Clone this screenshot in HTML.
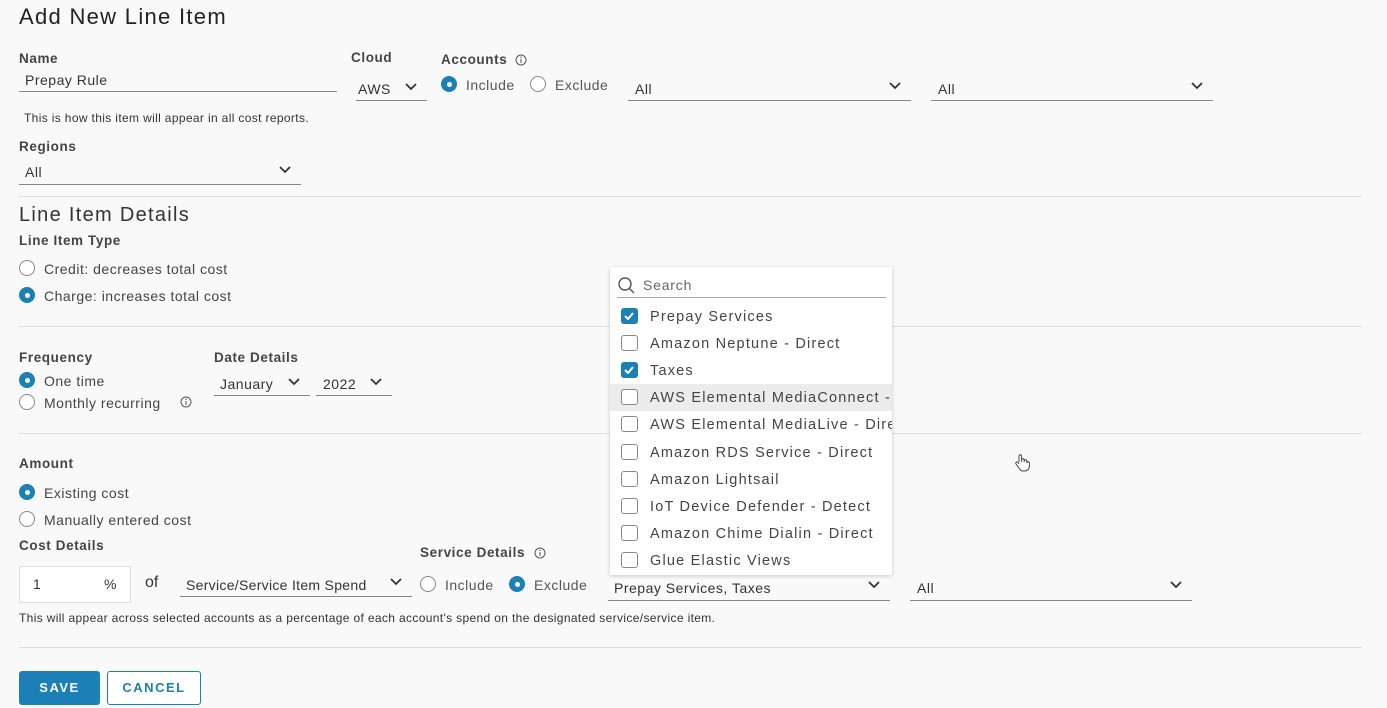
<!DOCTYPE html>
<html><head><style>
body{margin:0;width:1387px;height:708px;background:#f9f9f9;font-family:"Liberation Sans",sans-serif;color:#333;position:relative;overflow:hidden}
.a{position:absolute;white-space:nowrap}
.lbl{font-size:13.5px;font-weight:bold;color:#444;letter-spacing:.6px}
.t{font-size:14px;color:#333;letter-spacing:.5px}
.ul{position:absolute;height:1px;background:#888}
.hr{position:absolute;left:19px;width:1343px;height:1px;background:#ddd}
.r{position:absolute;width:16px;height:16px;border:1.5px solid #888;border-radius:50%;box-sizing:border-box;background:#fff}
.r.on{border:none;background:#1a80b6}
.r.on:after{content:"";position:absolute;left:5.5px;top:5.5px;width:5px;height:5px;border-radius:50%;background:#fff}
.cb{position:absolute;left:621px;width:17px;height:16px;border:1.5px solid #888;border-radius:3px;box-sizing:border-box;background:#fff}
.cb.on{border:none;background:#1a80b6}
.it{position:absolute;left:650px;font-size:14.5px;color:#444;letter-spacing:1.2px;white-space:nowrap}
.help{font-size:12px;color:#333;letter-spacing:.35px}
</style></head><body>
<svg width="0" height="0" style="position:absolute"><defs><symbol id="ch" viewBox="0 0 12 8"><polyline points="1,1 6,6 11,1" fill="none" stroke="#333" stroke-width="1.8"/></symbol><symbol id="inf" viewBox="0 0 12 12"><circle cx="6" cy="6" r="5" fill="none" stroke="#555" stroke-width="1"/><line x1="6" y1="5" x2="6" y2="9" stroke="#555"/><circle cx="6" cy="3.3" r=".7" fill="#555"/></symbol></defs></svg>

<div class="a" style="left:19px;top:4px;font-size:22px;color:#222;letter-spacing:1.3px">Add New Line Item</div>

<div class="a lbl" style="left:19px;top:51px">Name</div>
<div class="a t" style="left:25px;top:72px">Prepay Rule</div>
<div class="ul" style="left:19px;top:91px;width:318px"></div>
<div class="a help" style="left:24px;top:111px">This is how this item will appear in all cost reports.</div>

<div class="a lbl" style="left:351px;top:50px">Cloud</div>
<div class="a t" style="left:358px;top:81px">AWS</div>
<svg class="a" style="left:405px;top:83px" width="12" height="8"><use href="#ch"/></svg>
<div class="ul" style="left:356px;top:100px;width:71px"></div>

<div class="a lbl" style="left:441px;top:52px">Accounts</div>
<svg class="a" style="left:515px;top:54px" width="12" height="12"><use href="#inf"/></svg>
<div class="r on" style="left:441px;top:76px"></div><div class="a t" style="left:466px;top:77px;color:#555">Include</div>
<div class="r" style="left:530px;top:76px"></div><div class="a t" style="left:555px;top:77px;color:#555">Exclude</div>

<div class="a t" style="left:635px;top:81px">All</div>
<svg class="a" style="left:889px;top:82px" width="12" height="8"><use href="#ch"/></svg>
<div class="ul" style="left:628px;top:100px;width:283px"></div>
<div class="a t" style="left:938px;top:81px">All</div>
<svg class="a" style="left:1191px;top:82px" width="12" height="8"><use href="#ch"/></svg>
<div class="ul" style="left:931px;top:100px;width:282px"></div>

<div class="a lbl" style="left:19px;top:139px">Regions</div>
<div class="a t" style="left:25px;top:164px">All</div>
<svg class="a" style="left:279px;top:166px" width="12" height="8"><use href="#ch"/></svg>
<div class="ul" style="left:19px;top:184px;width:282px"></div>

<div class="hr" style="top:196px"></div>
<div class="a" style="left:19px;top:204px;font-size:20px;color:#333;letter-spacing:1.3px">Line Item Details</div>
<div class="a lbl" style="left:19px;top:233px">Line Item Type</div>
<div class="r" style="left:19px;top:260px"></div><div class="a t" style="left:44px;top:261px;color:#444">Credit: decreases total cost</div>
<div class="r on" style="left:19px;top:287px"></div><div class="a t" style="left:44px;top:288px;color:#444">Charge: increases total cost</div>

<div class="hr" style="top:326px"></div>
<div class="a lbl" style="left:19px;top:350px">Frequency</div>
<div class="r on" style="left:19px;top:372px"></div><div class="a t" style="left:44px;top:373px;color:#444">One time</div>
<div class="r" style="left:19px;top:394px"></div><div class="a t" style="left:44px;top:395px;color:#444">Monthly recurring</div>
<svg class="a" style="left:180px;top:396px" width="12" height="12"><use href="#inf"/></svg>
<div class="a lbl" style="left:214px;top:350px">Date Details</div>
<div class="a t" style="left:220px;top:376px">January</div>
<svg class="a" style="left:288px;top:378px" width="12" height="8"><use href="#ch"/></svg>
<div class="ul" style="left:214px;top:395px;width:96px"></div>
<div class="a t" style="left:323px;top:376px">2022</div>
<svg class="a" style="left:370px;top:378px" width="12" height="8"><use href="#ch"/></svg>
<div class="ul" style="left:316px;top:395px;width:76px"></div>

<div class="hr" style="top:433px"></div>
<div class="a lbl" style="left:19px;top:456px">Amount</div>
<div class="r on" style="left:19px;top:484px"></div><div class="a t" style="left:44px;top:485px;color:#444">Existing cost</div>
<div class="r" style="left:19px;top:511px"></div><div class="a t" style="left:44px;top:512px;color:#444">Manually entered cost</div>
<div class="a lbl" style="left:19px;top:538px">Cost Details</div>
<div class="a" style="left:19px;top:566px;width:112px;height:37px;border:1px solid #ddd;background:#fff;box-sizing:border-box"></div>
<div class="a t" style="left:33px;top:576px">1</div>
<div class="a t" style="left:104px;top:576px">%</div>
<div class="a" style="left:145px;top:574px;font-size:16px">of</div>
<div class="a t" style="left:186px;top:577px;letter-spacing:.3px">Service/Service Item Spend</div>
<svg class="a" style="left:390px;top:578px" width="12" height="8"><use href="#ch"/></svg>
<div class="ul" style="left:180px;top:596px;width:232px"></div>
<div class="a lbl" style="left:420px;top:545px">Service Details</div>
<svg class="a" style="left:534px;top:547px" width="12" height="12"><use href="#inf"/></svg>
<div class="r" style="left:420px;top:576px"></div><div class="a t" style="left:445px;top:577px;color:#555">Include</div>
<div class="r on" style="left:509px;top:576px"></div><div class="a t" style="left:534px;top:577px;color:#555">Exclude</div>
<div class="a t" style="left:614px;top:580px">Prepay Services, Taxes</div>
<svg class="a" style="left:868px;top:581px" width="12" height="8"><use href="#ch"/></svg>
<div class="ul" style="left:608px;top:600px;width:282px"></div>
<div class="a t" style="left:917px;top:580px">All</div>
<svg class="a" style="left:1170px;top:581px" width="12" height="8"><use href="#ch"/></svg>
<div class="ul" style="left:910px;top:600px;width:282px"></div>
<div class="a help" style="left:19px;top:611px">This will appear across selected accounts as a percentage of each account's spend on the designated service/service item.</div>

<div class="hr" style="top:647px"></div>
<div class="a" style="left:19px;top:671px;width:81px;height:34px;background:#1a80b6;border-radius:3px;color:#fff;font-size:13px;font-weight:bold;letter-spacing:1.5px;text-align:center;line-height:34px">SAVE</div>
<div class="a" style="left:107px;top:671px;width:94px;height:34px;border:1px solid #1a80b6;box-sizing:border-box;border-radius:3px;color:#1a80b6;font-size:13px;font-weight:bold;letter-spacing:1.5px;text-align:center;line-height:32px;background:#fff">CANCEL</div>

<div class="a" style="left:610px;top:267px;width:282px;height:308px;background:#fff;box-shadow:0 1px 4px rgba(0,0,0,.2);overflow:hidden">
<div class="a" style="left:0;top:117px;width:282px;height:27px;background:#ececec"></div>
</div>
<svg class="a" style="left:617px;top:276px" width="20" height="18"><circle cx="8" cy="8" r="6" fill="none" stroke="#555" stroke-width="1.4"/><line x1="12.5" y1="12.5" x2="17" y2="17" stroke="#555" stroke-width="1.4"/></svg>
<div class="a" style="left:643px;top:277px;font-size:14px;color:#666;letter-spacing:.8px">Search</div>
<div class="ul" style="left:617px;top:297px;width:269px;background:#aaa"></div>
<div style="position:absolute;left:0;top:0;width:892px;height:708px;overflow:hidden">
<div class="cb on" style="top:308px"></div><div class="it" style="top:309px">Prepay Services</div>
<div class="cb" style="top:335px"></div><div class="it" style="top:336px">Amazon Neptune - Direct</div>
<div class="cb on" style="top:362px"></div><div class="it" style="top:363px">Taxes</div>
<div class="cb" style="top:389px"></div><div class="it" style="top:390px">AWS Elemental MediaConnect - Direct</div>
<div class="cb" style="top:416px"></div><div class="it" style="top:417px">AWS Elemental MediaLive - Direct</div>
<div class="cb" style="top:444px"></div><div class="it" style="top:445px">Amazon RDS Service - Direct</div>
<div class="cb" style="top:471px"></div><div class="it" style="top:472px">Amazon Lightsail</div>
<div class="cb" style="top:498px"></div><div class="it" style="top:499px">IoT Device Defender - Detect</div>
<div class="cb" style="top:525px"></div><div class="it" style="top:526px">Amazon Chime Dialin - Direct</div>
<div class="cb" style="top:552px"></div><div class="it" style="top:553px">Glue Elastic Views</div>
</div>
<svg class="a" style="left:624px;top:312px" width="10" height="8"><polyline points="1,4 4,7 9,1" fill="none" stroke="#fff" stroke-width="2"/></svg>
<svg class="a" style="left:624px;top:366px" width="10" height="8"><polyline points="1,4 4,7 9,1" fill="none" stroke="#fff" stroke-width="2"/></svg>
<svg class="a" style="left:1014px;top:453px" width="18" height="20"><path d="M5 9V3a1.3 1.3 0 0 1 2.6 0v6 M7.6 8V7a1.3 1.3 0 0 1 2.6 0v2 M10.2 9V8a1.3 1.3 0 0 1 2.6 0v2 M12.8 10a1.3 1.3 0 0 1 2.6 0v3c0 3-2 5-5 5H9c-2 0-3-1-4-3l-3-4a1.2 1.2 0 0 1 2-1.5L5 11" fill="#fff" stroke="#444" stroke-width="1"/></svg>
</body></html>
